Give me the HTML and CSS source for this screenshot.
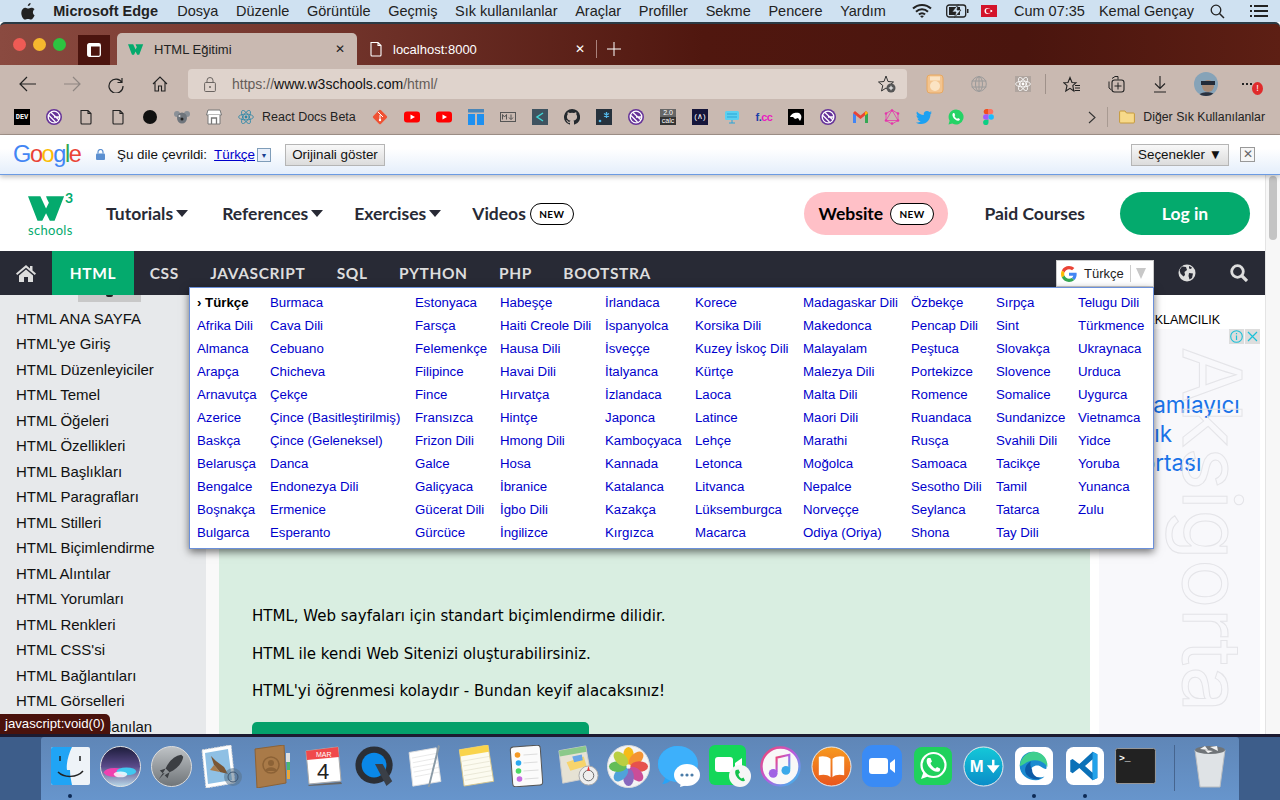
FILE: index.html
```html
<!DOCTYPE html>
<html lang="tr">
<head>
  <meta charset="UTF-8" />
  <title>HTML Eğitimi</title>
  <link rel="stylesheet" href="styles.css">
</head>
<body>

<svg class="sprites" width="0" height="0">
  <symbol id="w3" viewBox="0 0 40 26"><path d="M0 0H13L19 13 22 7 20 3 19 0H38L28 26H23L19 18 15 26H10Z" fill="#04aa6d"/></symbol>
  <symbol id="doc" viewBox="0 0 16 16"><path d="M3 1.500H10L13 4.500V14A1 1 0 0 1 12 15H4A1 1 0 0 1 3 14ZM10 1.500V4.500H13" fill="none" stroke="currentColor" stroke-width="1.100"/></symbol>
  <symbol id="gatsby" viewBox="0 0 16 16"><circle cx="8" cy="8" r="8" fill="#663399"/><circle cx="8" cy="8" r="5.800" fill="none" stroke="#fff" stroke-width="1.300"/><path d="M3 6.500 9.500 13M5 3.500 13 11M8 8H13" stroke="#fff" stroke-width="1.300" fill="none"/></symbol>
  <symbol id="yt" viewBox="0 0 16 16"><rect y="2.500" width="16" height="11" rx="3" fill="#f00"/><path d="M6.500 5.500 11 8 6.500 10.500Z" fill="#fff"/></symbol>
  <symbol id="react" viewBox="0 0 16 16"><g fill="none" stroke="currentColor" stroke-width=".8"><ellipse cx="8" cy="8" rx="7.400" ry="2.900"/><ellipse cx="8" cy="8" rx="7.400" ry="2.900" transform="rotate(60 8 8)"/><ellipse cx="8" cy="8" rx="7.400" ry="2.900" transform="rotate(120 8 8)"/></g><circle cx="8" cy="8" r="1.400" fill="currentColor"/></symbol>
  <symbol id="gg" viewBox="0 0 48 48"><path fill="#EA4335" d="M24 9.500c3.540 0 6.710 1.220 9.210 3.600l6.850-6.850C35.900 2.380 30.470 0 24 0 14.620 0 6.510 5.380 2.560 13.220l7.980 6.190C12.430 13.720 17.740 9.500 24 9.500z"/><path fill="#4285F4" d="M46.980 24.550c0-1.570-.15-3.090-.38-4.550H24v9.020h12.940c-.58 2.960-2.260 5.480-4.780 7.180l7.730 6c4.510-4.180 7.090-10.360 7.090-17.650z"/><path fill="#FBBC05" d="M10.530 28.590c-.48-1.450-.76-2.990-.76-4.590s.27-3.140.76-4.590l-7.980-6.190C.92 16.460 0 20.120 0 24c0 3.880.92 7.540 2.560 10.780l7.970-6.190z"/><path fill="#34A853" d="M24 48c6.480 0 11.930-2.130 15.890-5.810l-7.730-6c-2.150 1.450-4.920 2.300-8.160 2.300-6.260 0-11.570-4.220-13.470-9.910l-7.980 6.190C6.510 42.620 14.620 48 24 48z"/></symbol>
</svg>

<!-- macos menu bar -->
<div class="menubar">
  <svg class="apple" width="14" height="17" viewBox="0 0 14 17"><path d="M9.600 0C9.700 1.600 8.300 3.200 6.800 3.100 6.700 1.600 8.100.1 9.600 0ZM13.600 12.300C12.800 14.200 11.500 16.600 10 16.600 8.800 16.600 8.500 15.900 7 15.900 5.500 15.900 5.100 16.600 4 16.600 2.300 16.600.3 13.100.3 10 .3 6.800 2.300 4.800 4.400 4.800 5.600 4.800 6.500 5.600 7.200 5.600 7.900 5.600 9 4.600 10.500 4.700 11.100 4.700 12.700 4.900 13.600 6.300 11.300 7.700 11.500 11.300 13.600 12.300Z" fill="#222"/></svg>
  <b class="menu-app">Microsoft Edge</b>
  <span>Dosya</span><span>Düzenle</span><span>Görüntüle</span><span>Geçmiş</span><span>Sık kullanılanlar</span><span>Araçlar</span><span>Profiller</span><span>Sekme</span><span>Pencere</span><span>Yardım</span>
  <div class="menu-right">
    <svg width="20" height="16" viewBox="0 0 20 16"><g fill="none" stroke="#222" stroke-width="2"><path d="M1 5.500A13 13 0 0 1 19 5.500"/><path d="M4 8.700A8.500 8.500 0 0 1 16 8.700"/><path d="M7 11.500A4 4 0 0 1 13 11.500"/></g><path d="M10 15 8 13Q10 11.800 12 13Z" fill="#222"/></svg>
    <svg class="batt" width="23" height="14" viewBox="0 0 23 14"><rect x=".7" y="1" width="19" height="12" rx="2.500" fill="none" stroke="#222" stroke-width="1.300"/><rect x="3" y="3" width="11" height="8" fill="#222"/><path d="M21 5h1.500v4H21Z" fill="#222"/><path d="M12 .5 6 8h4L8.500 13.500 15 6h-4Z" fill="#cfe1f1" stroke="#222" stroke-width=".7"/></svg>
    <svg class="flag" width="16" height="12" viewBox="0 0 16 12"><rect width="16" height="12" fill="#d3132a"/><circle cx="6.500" cy="6" r="3" fill="#fff"/><circle cx="7.300" cy="6" r="2.400" fill="#d3132a"/><circle cx="10.300" cy="6" r="1" fill="#fff"/></svg>
    <span class="menu-clock">Cum 07:35</span>
    <span class="menu-user">Kemal Gençay</span>
    <svg class="menu-search" width="15" height="15" viewBox="0 0 15 15"><circle cx="6" cy="6" r="4.800" fill="none" stroke="#222" stroke-width="1.300"/><path d="M9.500 9.500 14 14" stroke="#222" stroke-width="1.500"/></svg>
    <svg class="menu-list" width="18" height="12" viewBox="0 0 18 12"><path d="M0 1h2M4 1h14M0 6h2M4 6h14M0 11h2M4 11h14" stroke="#222" stroke-width="1.800"/></svg>
  </div>
</div>

<div class="window">

  <div class="tabstrip">
    <i class="light red"></i><i class="light yellow"></i><i class="light green"></i>
    <div class="tabs-btn"><svg width="14" height="14" viewBox="0 0 14 14"><rect x=".7" y=".7" width="12.600" height="12.600" rx="1.500" fill="none" stroke="#fff" stroke-width="1.300"/><path d="M1 1H13V3.500H4V13H1Z" fill="#fff"/></svg></div>
    <div class="tab tab-active">
      <svg class="tab-ico" width="16" height="11"><use href="#w3"/></svg>
      <span>HTML Eğitimi</span>
      <span class="tab-x">✕</span>
    </div>
    <div class="tab tab-other">
      <svg class="tab-ico" width="16" height="16"><use href="#doc"/></svg>
      <span>localhost:8000</span>
      <span class="tab-x">✕</span>
    </div>
    <div class="tab-sep"></div>
    <svg class="tab-plus" width="14" height="14" viewBox="0 0 14 14"><path d="M7 0V14M0 7H14" stroke="#fff" stroke-width="1"/></svg>
  </div>

  <div class="toolbar">
    <div class="tool"><svg width="18" height="16" viewBox="0 0 18 16"><path d="M17 8H1M8 1 1 8 8 15" fill="none" stroke="#222" stroke-width="1.200"/></svg></div>
    <div class="tool"><svg width="18" height="16" viewBox="0 0 18 16"><path d="M1 8H17M10 1 17 8 10 15" fill="none" stroke="#8f8682" stroke-width="1.200"/></svg></div>
    <div class="tool"><svg width="18" height="18" viewBox="0 0 18 18"><path d="M15 3V7.500H10.500M15 7.500A7 7 0 1 0 16 11" fill="none" stroke="#222" stroke-width="1.200"/></svg></div>
    <div class="tool"><svg width="16" height="16" viewBox="0 0 16 16"><path d="M1 8 8 1 15 8M3 6.500V15H6.500V10H9.500V15H13V6.500" fill="none" stroke="#222" stroke-width="1.100"/></svg></div>
    <div class="address">
      <svg class="addr-lock" width="12" height="15" viewBox="0 0 12 15"><rect x=".6" y="5.500" width="10.800" height="9" rx="1" fill="none" stroke="#6a6461" stroke-width="1"/><path d="M3 5.500V3.500A3 3 0 0 1 9 3.500V5.500" fill="none" stroke="#6a6461"/><circle cx="6" cy="10" r="1" fill="#6a6461"/></svg>
      <span class="addr-url">https://<b>www.w3schools.com</b>/html/</span>
      <svg class="addr-star" width="18" height="18" viewBox="0 0 18 18"><path d="M8 1 10 6.500 15.500 7 11.200 10.500 12.500 16 8 13 3.500 16 4.800 10.500.5 7 6 6.500Z" fill="none" stroke="#333" stroke-width="1"/><circle cx="13" cy="13" r="4.500" fill="#555"/><path d="M13 10.800V15.200M10.800 13H15.200" stroke="#fff"/></svg>
    </div>
    <div class="tool"><svg width="18" height="20" viewBox="0 0 18 20"><rect x="1" y="1" width="16" height="18" rx="3" fill="#f3c48f" stroke="#e8a860"/><circle cx="9" cy="12" r="5" fill="#fbe3c3"/><rect x="4" y="2.500" width="10" height="4" fill="#fbe3c3"/></svg></div>
    <div class="tool"><svg width="16" height="16" viewBox="0 0 16 16"><g fill="none" stroke="#9a9a9a"><circle cx="8" cy="8" r="7.300"/><ellipse cx="8" cy="8" rx="3.500" ry="7.300"/><path d="M8 0V16M.7 5H15.300M.7 11H15.300"/></g></svg></div>
    <div class="tool"><svg class="ext-react" width="16" height="16"><use href="#react"/></svg></div>
    <div class="tool-sep"></div>
    <div class="tool"><svg width="18" height="17" viewBox="0 0 18 17"><path d="M7 1.500 9 6.500 13 6.700 9.800 9.700 10.800 15 7 12.300 2.800 15 4 9.700.8 6.700 5 6.500Z" fill="none" stroke="#222" stroke-width="1.100"/><path d="M12 9.500H17M12 12H17M11.500 14.500H17" stroke="#222"/></svg></div>
    <div class="tool"><svg width="18" height="18" viewBox="0 0 18 18"><path d="M5 3.500 8 1.500 11 1.500V4.500M2 6.500V13L4.500 15" fill="none" stroke="#222"/><rect x="5" y="5" width="12" height="12" rx="2.500" fill="none" stroke="#222" stroke-width="1.100"/><path d="M11 7.500V14.500M7.500 11H14.500" stroke="#222"/></svg></div>
    <div class="tool"><svg width="14" height="17" viewBox="0 0 14 17"><path d="M7 0V12M2 7.500 7 12.500 12 7.500M1 16H13" fill="none" stroke="#222" stroke-width="1.100"/></svg></div>
    <div class="tool tool-avatar"><svg width="24" height="24" viewBox="0 0 24 24"><defs><clipPath id="av"><circle cx="12" cy="12" r="12"/></clipPath></defs><g clip-path="url(#av)"><rect width="24" height="24" fill="#86a3b8"/><circle cx="14" cy="14" r="6" fill="#a78a76"/><path d="M7 9 H21 V13 H7Z" fill="#232b38"/><path d="M4 24C6 19 20 19 22 24Z" fill="#2a3240"/></g></svg></div>
    <div class="tool tool-more"><span class="more-dots"><i></i><i></i><i></i></span><i class="more-badge">!</i></div>
  </div>

  <div class="bookmarks">
    <div class="bm"><span class="ico-dev">DEV</span></div>
    <div class="bm"><svg width="16" height="16"><use href="#gatsby"/></svg></div>
    <div class="bm"><svg width="16" height="16" class="ico-dark"><use href="#doc"/></svg></div>
    <div class="bm"><svg width="16" height="16" class="ico-dark"><use href="#doc"/></svg></div>
    <div class="bm"><i class="ico-dot"></i></div>
    <div class="bm"><svg width="16" height="14" viewBox="0 0 16 14"><circle cx="3" cy="4" r="3" fill="#8a9097"/><circle cx="13" cy="4" r="3" fill="#8a9097"/><ellipse cx="8" cy="8" rx="5" ry="5.500" fill="#6f757c"/><circle cx="8" cy="9" r="1.500" fill="#222"/><circle cx="5.500" cy="6" r="1" fill="#ddd"/></svg></div>
    <div class="bm"><svg width="16" height="16" viewBox="0 0 16 16"><path d="M2 1H14L15.500 6H.5Z" fill="#fff" stroke="#777"/><path d="M2 6V15H14V6" fill="#fff" stroke="#777"/><path d="M5.500 15V9H10.500V15" fill="none" stroke="#777" stroke-width="1.300"/></svg></div>
    <div class="bm bm-text"><span class="bm-cell"><svg class="ico-react" width="16" height="16"><use href="#react"/></svg></span>React Docs Beta</div>
    <div class="bm"><svg width="16" height="16" viewBox="0 0 16 16"><rect x="2.500" y="2.500" width="11" height="11" rx="1.500" fill="#f05133" transform="rotate(45 8 8)"/><path d="M6 3 11 8M8 6V12" stroke="#fff" stroke-width="1"/><circle cx="8" cy="11" r="1.200" fill="#fff"/></svg></div>
    <div class="bm"><svg width="16" height="16"><use href="#yt"/></svg></div>
    <div class="bm"><svg width="16" height="16"><use href="#yt"/></svg></div>
    <div class="bm"><svg width="16" height="16" viewBox="0 0 16 16"><rect width="16" height="3.500" fill="#4a86b8"/><rect y="5" width="7" height="11" fill="#1e90f0"/><rect x="9" y="5" width="7" height="11" fill="#1e90f0"/></svg></div>
    <div class="bm"><svg width="16" height="10" viewBox="0 0 16 10"><rect x=".5" y=".5" width="15" height="9" fill="none" stroke="#555"/><path d="M2.500 7.500V2.500L4.500 5 6.500 2.500V7.500M11 2.500V7M9 5.500 11 7.700 13 5.500" fill="none" stroke="#555"/></svg></div>
    <div class="bm"><svg width="16" height="16" viewBox="0 0 16 16"><rect width="16" height="16" fill="#3f5360"/><path d="M11 4 5 8 11 12" fill="none" stroke="#41d6d6" stroke-width="1.500"/></svg></div>
    <div class="bm"><svg width="16" height="16" viewBox="0 0 16 16"><path d="M8 0a8 8 0 0 0-2.500 15.600c.4.100.5-.2.500-.4v-1.400c-2.200.5-2.700-1-2.700-1-.4-.9-.9-1.200-.9-1.200-.7-.5.100-.5.100-.5.800.1 1.200.8 1.200.8.700 1.200 1.900.9 2.300.7.100-.5.300-.9.500-1.100-1.800-.2-3.600-.9-3.600-4 0-.9.300-1.600.8-2.100-.1-.2-.4-1 .1-2.100 0 0 .7-.2 2.200.8a7.700 7.700 0 0 1 4 0c1.500-1 2.200-.8 2.200-.8.400 1.100.2 1.900.1 2.100.5.600.8 1.300.8 2.100 0 3.100-1.900 3.800-3.700 4 .3.300.6.800.6 1.500v2.200c0 .2.100.5.600.4A8 8 0 0 0 8 0Z" fill="#24292e"/></svg></div>
    <div class="bm"><svg width="16" height="16" viewBox="0 0 16 16"><rect width="16" height="16" fill="#26323d"/><circle cx="4" cy="12" r="1.300" fill="#53b7e8"/><path d="M10.500 3V9M8 4.500 13 7.500M13 4.500 8 7.500" stroke="#53b7e8" stroke-width="1.300"/></svg></div>
    <div class="bm"><svg width="16" height="16"><use href="#gatsby"/></svg></div>
    <div class="bm"><span class="ico-calc"><b>2.0</b><b>calc</b></span></div>
    <div class="bm"><span class="ico-tail">(∧)</span></div>
    <div class="bm"><svg width="16" height="14" viewBox="0 0 16 14"><rect x="1" y="1" width="14" height="9" rx="1.500" fill="#5bd0f0"/><path d="M3 4H13M3 7H13M5 13H11M8 10V13" stroke="#2aa5d8"/></svg></div>
    <div class="bm"><span class="ico-fcc">f.<em>cc</em></span></div>
    <div class="bm"><svg width="16" height="16" viewBox="0 0 16 16"><rect width="16" height="16"/><path d="M2 8C3 4 8 3 11 4 14 6 14 9 12 12L10 9 7 10 5 8Z" fill="#fff"/></svg></div>
    <div class="bm"><svg width="16" height="16"><use href="#gatsby"/></svg></div>
    <div class="bm"><svg width="15" height="12" viewBox="0 0 15 12"><path d="M0 2V12H3V4Z" fill="#4285f4"/><path d="M15 2V12H12V4Z" fill="#34a853"/><path d="M0 2 2 0 7.500 4.500 13 0 15 2 7.500 8Z" fill="#ea4335"/><path d="M13 0 15 2 12 4.500V1.500Z" fill="#fbbc05"/></svg></div>
    <div class="bm"><svg width="16" height="16" viewBox="0 0 16 16"><path d="M8 1 14 4.500V11.500L8 15 2 11.500V4.500ZM8 1 2 11.500H14Z" fill="none" stroke="#e535ab" stroke-width=".8"/><g fill="#e535ab"><circle cx="8" cy="1.500" r="1.300"/><circle cx="14" cy="4.500" r="1.300"/><circle cx="14" cy="11.500" r="1.300"/><circle cx="8" cy="14.500" r="1.300"/><circle cx="2" cy="11.500" r="1.300"/><circle cx="2" cy="4.500" r="1.300"/></g></svg></div>
    <div class="bm"><svg width="16" height="13" viewBox="0 0 16 13"><path d="M16 1.500 14.500 3.200C14.500 8 11 13 5 13 3 13 1.500 12.500 0 11.500 2 11.700 3.500 11 4.700 10.200 3 10 2 9 1.500 7.700H3C1.300 7 .5 5.800.5 4.200L2 4.700C.5 3.500.2 1.800 1 .5 2.800 2.600 5 3.800 7.800 4 7.300 1.500 9 0 11 0 12 0 12.800.4 13.400 1L15.500.2 14.500 2Z" fill="#1da1f2"/></svg></div>
    <div class="bm"><svg width="16" height="16" viewBox="0 0 16 16"><path d="M8 .5A7.500 7.500 0 0 0 1.600 11.800L.5 15.500 4.300 14.500A7.500 7.500 0 1 0 8 .5Z" fill="#25d366"/><path d="M5.300 4C4.500 4.500 4 6 5 8 6 10 8.500 12 10.500 11.800 11.500 11.500 12 10.500 11.800 10L10 9 9.300 9.800C8.300 9.500 6.800 8 6.500 7L7.200 6.200 6.300 4Z" fill="#fff"/></svg></div>
    <div class="bm"><svg width="11" height="16" viewBox="0 0 11 16"><path d="M5.500 0H2.800A2.700 2.700 0 0 0 2.800 5.300H5.500Z" fill="#f24e1e"/><path d="M5.500 0H8.200A2.700 2.700 0 0 1 8.200 5.300H5.500Z" fill="#ff7262"/><path d="M5.500 5.300H2.800A2.700 2.700 0 0 0 2.800 10.700H5.500Z" fill="#a259ff"/><circle cx="8.200" cy="8" r="2.700" fill="#1abcfe"/><path d="M5.500 10.700H2.800A2.700 2.700 0 1 0 5.500 13.400Z" fill="#0acf83"/></svg></div>
    <div class="bm-right">
      <svg width="8" height="13" viewBox="0 0 8 13"><path d="M1 1 7 6.500 1 12" fill="none" stroke="#333" stroke-width="1.100"/></svg>
      <i class="bm-sep"></i>
      <svg width="16" height="14" viewBox="0 0 16 14"><path d="M.6 2A1 1 0 0 1 1.600 1H6L7.500 3H14.400A1 1 0 0 1 15.400 4V12A1 1 0 0 1 14.400 13H1.600A1 1 0 0 1 .6 12Z" fill="#f7d98a" stroke="#c69a3c"/></svg>
      <span class="bm-folder-name">Diğer Sık Kullanılanlar</span>
    </div>
  </div>

  <!-- google translate bar -->
  <div class="translate">
    <span class="g-logo"><i class="gb">G</i><i class="gr">o</i><i class="gy">o</i><i class="gb">g</i><i class="gg">l</i><i class="gr">e</i></span>
    <svg class="tr-lock" width="9" height="11" viewBox="0 0 9 11"><rect y="4.500" width="9" height="6.500" rx="1" fill="#5b8fd0"/><path d="M2 4.500V3A2.500 2.500 0 0 1 7 3V4.500" fill="none" stroke="#5b8fd0" stroke-width="1.200"/></svg>
    <span class="tr-label">Şu dile çevrildi:</span>
    <a class="tr-link">Türkçe</a>
    <span class="tr-select">▼</span>
    <button class="tr-btn tr-orig">Orijinali göster</button>
    <button class="tr-btn tr-opts">Seçenekler ▼</button>
    <span class="tr-close">✕</span>
  </div>

  <div class="browser-page">
    <div class="page-scroll">

      <header class="site-head">
        <div class="logo">
          <svg width="38" height="25"><use href="#w3"/></svg>
          <sup>3</sup>
          <span>schools</span>
        </div>
        <a class="head-link">Tutorials<i class="caret"></i></a>
        <a class="head-link">References<i class="caret"></i></a>
        <a class="head-link">Exercises<i class="caret"></i></a>
        <a class="head-link">Videos<span class="new">NEW</span></a>
        <a class="pill pill-pink">Website<span class="new">NEW</span></a>
        <a class="head-link paid">Paid Courses</a>
        <a class="pill pill-green">Log in</a>
      </header>

      <nav class="topnav">
        <a class="nav-home"><svg width="20" height="17" viewBox="0 0 20 17"><path d="M10 0 0 8.500 1.200 10 10 2.800 18.800 10 20 8.500 16.500 5.500V1H14V3.400Z" fill="#ddd"/><path d="M3 10.500 10 4.500 17 10.500V17H12V12H8V17H3Z" fill="#ddd"/></svg></a>
        <a class="nav-active">HTML</a>
        <a>CSS</a>
        <a>JAVASCRIPT</a>
        <a>SQL</a>
        <a>PYTHON</a>
        <a>PHP</a>
        <a>BOOTSTRA</a>
        <div class="lang-widget">
          <svg width="16" height="16"><use href="#gg"/></svg>
          <span>Türkçe</span>
          <i class="lang-sep"></i>
          <i class="lang-arrow"></i>
        </div>
        <a class="nav-ico"><svg width="18" height="18" viewBox="0 0 18 18"><circle cx="9" cy="9" r="8.500" fill="#ddd"/><path d="M4 2.500 8 3 9 6 6.500 8 7 11 5.500 12.500 2.500 9.500 1.500 6ZM11 9 15 9.500 14 14 11.500 15.500 10.500 12ZM11 2 14 3.500 13 5 11 4.500Z" fill="#282a35"/></svg></a>
        <a class="nav-ico"><svg width="18" height="18" viewBox="0 0 18 18"><circle cx="7.500" cy="7.500" r="5.800" fill="none" stroke="#ddd" stroke-width="2.800"/><path d="M12 12 17 17" stroke="#ddd" stroke-width="3.200"/></svg></a>
      </nav>

      <div class="content">
        <aside class="sidebar">
          <div class="side-cut"><i></i></div>
          <a>HTML ANA SAYFA</a>
          <a>HTML'ye Giriş</a>
          <a>HTML Düzenleyiciler</a>
          <a>HTML Temel</a>
          <a>HTML Öğeleri</a>
          <a>HTML Özellikleri</a>
          <a>HTML Başlıkları</a>
          <a>HTML Paragrafları</a>
          <a>HTML Stilleri</a>
          <a>HTML Biçimlendirme</a>
          <a>HTML Alıntılar</a>
          <a>HTML Yorumları</a>
          <a>HTML Renkleri</a>
          <a>HTML CSS'si</a>
          <a>HTML Bağlantıları</a>
          <a>HTML Görselleri</a>
          <a>HTML Sık Kullanılan</a>
        </aside>
        <main class="main">
          <div class="intro">
            <p>HTML, Web sayfaları için standart biçimlendirme dilidir.</p>
            <p>HTML ile kendi Web Sitenizi oluşturabilirsiniz.</p>
            <p>HTML'yi öğrenmesi kolaydır - Bundan keyif alacaksınız!</p>
            <div class="start-btn"></div>
          </div>
        </main>
        <aside class="right-col">
          <div class="ad-label">REKLAMCILIK</div>
          <div class="ad">
            <span class="ad-mark">Aksigorta</span>
            <div class="ad-head">Tamamlayıcı<br>Sağlık<br>Sigortası</div>
            <div class="ad-icons">
              <i><svg width="13" height="13" viewBox="0 0 13 13"><circle cx="6.500" cy="6.500" r="5.800" fill="none" stroke="#1cc0d8" stroke-width="1.100"/><path d="M6.500 5.500V10M6.500 3V4.300" stroke="#1cc0d8" stroke-width="1.200"/></svg></i>
              <i><svg width="11" height="11" viewBox="0 0 11 11"><path d="M1 1 10 10M10 1 1 10" stroke="#1cc0d8" stroke-width="1.200"/></svg></i>
            </div>
          </div>
        </aside>
      </div>
    </div>
    <div class="scrollbar"><i></i></div>
  </div>

  <!-- language menu opened from the translate widget -->
  <div class="lang-menu">
    <b class="lang-current">› Türkçe</b><a>Afrika Dili</a><a>Almanca</a><a>Arapça</a><a>Arnavutça</a><a>Azerice</a><a>Baskça</a><a>Belarusça</a><a>Bengalce</a><a>Boşnakça</a><a>Bulgarca</a>
    <a>Burmaca</a><a>Cava Dili</a><a>Cebuano</a><a>Chicheva</a><a>Çekçe</a><a>Çince (Basitleştirilmiş)</a><a>Çince (Geleneksel)</a><a>Danca</a><a>Endonezya Dili</a><a>Ermenice</a><a>Esperanto</a>
    <a>Estonyaca</a><a>Farsça</a><a>Felemenkçe</a><a>Filipince</a><a>Fince</a><a>Fransızca</a><a>Frizon Dili</a><a>Galce</a><a>Galiçyaca</a><a>Gücerat Dili</a><a>Gürcüce</a>
    <a>Habeşçe</a><a>Haiti Creole Dili</a><a>Hausa Dili</a><a>Havai Dili</a><a>Hırvatça</a><a>Hintçe</a><a>Hmong Dili</a><a>Hosa</a><a>İbranice</a><a>İgbo Dili</a><a>İngilizce</a>
    <a>İrlandaca</a><a>İspanyolca</a><a>İsveççe</a><a>İtalyanca</a><a>İzlandaca</a><a>Japonca</a><a>Kamboçyaca</a><a>Kannada</a><a>Katalanca</a><a>Kazakça</a><a>Kırgızca</a>
    <a>Korece</a><a>Korsika Dili</a><a>Kuzey İskoç Dili</a><a>Kürtçe</a><a>Laoca</a><a>Latince</a><a>Lehçe</a><a>Letonca</a><a>Litvanca</a><a>Lüksemburgca</a><a>Macarca</a>
    <a>Madagaskar Dili</a><a>Makedonca</a><a>Malayalam</a><a>Malezya Dili</a><a>Malta Dili</a><a>Maori Dili</a><a>Marathi</a><a>Moğolca</a><a>Nepalce</a><a>Norveççe</a><a>Odiya (Oriya)</a>
    <a>Özbekçe</a><a>Pencap Dili</a><a>Peştuca</a><a>Portekizce</a><a>Romence</a><a>Ruandaca</a><a>Rusça</a><a>Samoaca</a><a>Sesotho Dili</a><a>Seylanca</a><a>Shona</a>
    <a>Sırpça</a><a>Sint</a><a>Slovakça</a><a>Slovence</a><a>Somalice</a><a>Sundanizce</a><a>Svahili Dili</a><a>Tacikçe</a><a>Tamil</a><a>Tatarca</a><a>Tay Dili</a>
    <a>Telugu Dili</a><a>Türkmence</a><a>Ukraynaca</a><a>Urduca</a><a>Uygurca</a><a>Vietnamca</a><a>Yidce</a><a>Yoruba</a><a>Yunanca</a><a>Zulu</a>
  </div>

  <div class="status-tip">javascript:void(0)</div>
</div>

<!-- dock -->
<div class="desktop">
  <div class="dock">
    <div class="dock-app running"><svg width="39" height="38" viewBox="0 0 39 38"><rect width="39" height="38" rx="2" fill="#eef3f8"/><path d="M2 0H21C17 8 15 18 16 23H19C19 28 20 33 21 38H2A2 2 0 0 1 0 36V2A2 2 0 0 1 2 0Z" fill="#20a4f5"/><path d="M9 9V14M29 9V14" stroke="#222" stroke-width="1.500"/><path d="M7 25C13 31 26 31 32 24" fill="none" stroke="#222" stroke-width="1.500"/></svg></div>
    <div class="dock-app"><svg width="41" height="41" viewBox="0 0 42 42"><defs><linearGradient id="siri" x1="0" y1="0" x2="0" y2="1"><stop offset="0" stop-color="#1c1c3a"/><stop offset=".5" stop-color="#5a4a8a"/><stop offset="1" stop-color="#b8d8e8"/></linearGradient></defs><circle cx="21" cy="21" r="20.500" fill="url(#siri)" stroke="#e4e4e4"/><ellipse cx="15" cy="27" rx="11" ry="4.500" fill="#f040b0"/><ellipse cx="27" cy="26" rx="10" ry="4" fill="#40c8f0"/><ellipse cx="21" cy="29" rx="7" ry="3" fill="#fff" opacity=".8"/></svg></div>
    <div class="dock-app"><svg width="41" height="41" viewBox="0 0 42 42"><defs><linearGradient id="rocket" x1="0" y1="0" x2="0" y2="1"><stop offset="0" stop-color="#bfc3c6"/><stop offset="1" stop-color="#6f7478"/></linearGradient></defs><circle cx="21" cy="21" r="20.500" fill="url(#rocket)" stroke="#ddd"/><path d="M31 9C24 10 18 16 15 23L19 27C26 24 32 18 33 11ZM15 23 9 25 12 28ZM19 27 17 33 14 30ZM14 28 8 34 12 28Z" fill="#3b3e42"/></svg></div>
    <div class="dock-app"><svg width="42" height="43" viewBox="0 0 42 43"><path d="M1 5 30 0 34 38 5 43Z" fill="#fff" stroke="#ddd" stroke-dasharray="2 1"/><path d="M4 8 27 4 31 35 7 39Z" fill="#8fc0e4"/><path d="M10 11 15 16 23 22 27 29 19 27 13 20Z" fill="#7a5634"/><path d="M13 20 9 25 19 27Z" fill="#a97d4e"/><circle cx="32" cy="32" r="9" fill="#5a7288" opacity=".55"/><circle cx="32" cy="32" r="5" fill="none" stroke="#3f5670"/></svg></div>
    <div class="dock-app"><svg width="38" height="43" viewBox="0 0 38 43"><path d="M1 4 30 0 32 38 3 43Z" fill="#a97a48" stroke="#8c6236"/><rect x="32" y="8" width="4" height="9" fill="#e0e0e0"/><rect x="33" y="17" width="3" height="8" fill="#4ab870"/><rect x="33" y="25" width="3" height="9" fill="#e8a83c"/><circle cx="17" cy="20" r="8" fill="none" stroke="#8c6236" stroke-width="1.500"/><circle cx="17" cy="18" r="3" fill="#8c6236"/><path d="M11 26C12 21 22 21 23 26" fill="#8c6236"/></svg></div>
    <div class="dock-app"><svg width="38" height="40" viewBox="0 0 38 40"><path d="M3 39 36 36 37 38 4 40Z" fill="#666"/><path d="M1 5 33 1 36 35 4 38Z" fill="#fff" stroke="#aaa"/><path d="M1 5 33 1 34 11 2 14Z" fill="#f0494b"/><text x="11" y="11" class="dock-cal-m">MAR</text><text x="12" y="33" class="dock-cal-d">4</text></svg></div>
    <div class="dock-app"><svg width="42" height="42" viewBox="0 0 42 44"><circle cx="20" cy="21" r="19.500" fill="#2b2f36"/><circle cx="20" cy="21" r="13" fill="#0a88e8"/><path d="M21 20H29L39 38 33 43Z" fill="#3a3f47"/></svg></div>
    <div class="dock-app"><svg width="36" height="43" viewBox="0 0 36 46"><path d="M1 8 30 3 35 39 5 44Z" fill="#fff" stroke="#ddd"/><path d="M4 14 30 9M5 19 31 14M5 24 32 19M6 29 33 24M7 34 33 29" stroke="#ddd" stroke-width=".7"/><path d="M32 0 34 1 23 45 21 45Z" fill="#8a9aa6"/></svg></div>
    <div class="dock-app"><svg width="37" height="42" viewBox="0 0 36 44"><path d="M0 5 30 0 36 38 5 43Z" fill="#fcfbf0" stroke="#d6c68e"/><path d="M0 5 30 0 31 7 1 12Z" fill="#f9d44c"/><path d="M3 17 31 12M4 22 32 17M5 27 33 22M5 32 33 27M6 37 34 32" stroke="#e5e2d0" stroke-width=".8"/></svg></div>
    <div class="dock-app"><svg width="35" height="42" viewBox="0 0 34 42"><rect x="2" y="1" width="30" height="40" rx="3" fill="#fbfbfb" stroke="#555" transform="rotate(-4 17 21)"/><circle cx="8" cy="10" r="2.800" fill="#f59a23"/><circle cx="9" cy="18" r="2.800" fill="#2aa8f0"/><circle cx="9" cy="26" r="2.800" fill="#4cd964"/><circle cx="10" cy="34" r="2.800" fill="#c66be0"/><path d="M14 10 28 9M14 18 28 17M14 26 29 25M15 34 29 33" stroke="#ddd"/></svg></div>
    <div class="dock-app"><svg width="44" height="42" viewBox="0 0 44 44"><path d="M2 6 30 1 36 34 6 40Z" fill="#e6e2d4" stroke="#ccc"/><path d="M2 6 30 1 31 7 3 12Z" fill="#8bc98a"/><path d="M10 18 28 12 31 22 14 27Z" fill="#f7d46b"/><path d="M16 12 26 10 27 16 18 18Z" fill="#6aa6e8"/><circle cx="33" cy="32" r="10" fill="#eee" stroke="#aaa"/><circle cx="33" cy="32" r="5.500" fill="none" stroke="#666"/><path d="M33 22 34.500 27H31.500Z" fill="#e33"/></svg></div>
    <div class="dock-app"><svg width="43" height="43" viewBox="0 0 44 44"><circle cx="22" cy="22" r="21.500" fill="#f4f4f4" stroke="#ddd"/><g opacity=".9"><ellipse cx="22" cy="11" rx="5.500" ry="9" fill="#f7b500"/><ellipse cx="22" cy="11" rx="5.500" ry="9" fill="#f58a1f" transform="rotate(45 22 22)"/><ellipse cx="22" cy="11" rx="5.500" ry="9" fill="#e5413b" transform="rotate(90 22 22)"/><ellipse cx="22" cy="11" rx="5.500" ry="9" fill="#c63c8f" transform="rotate(135 22 22)"/><ellipse cx="22" cy="11" rx="5.500" ry="9" fill="#7d5ab8" transform="rotate(180 22 22)"/><ellipse cx="22" cy="11" rx="5.500" ry="9" fill="#3e9ad8" transform="rotate(225 22 22)"/><ellipse cx="22" cy="11" rx="5.500" ry="9" fill="#54b848" transform="rotate(270 22 22)"/><ellipse cx="22" cy="11" rx="5.500" ry="9" fill="#b4cc2e" transform="rotate(315 22 22)"/></g></svg></div>
    <div class="dock-app"><svg width="42" height="42" viewBox="0 0 42 42"><path d="M20 1C9 1 0 9 0 19 0 25 3 29 7 32 7 35 5 38 4 39 8 39 11 37 13 35Z" fill="#27a4f8"/><ellipse cx="20" cy="19" rx="20" ry="18" fill="#3db0fb"/><ellipse cx="29" cy="30" rx="13" ry="11" fill="#fff"/><path d="M23 38 22 42 29 40Z" fill="#fff"/><g fill="#4a7ca8"><circle cx="24" cy="30" r="1.600"/><circle cx="29" cy="30" r="1.600"/><circle cx="34" cy="30" r="1.600"/></g></svg></div>
    <div class="dock-app"><svg width="42" height="42" viewBox="0 0 42 42"><rect width="37" height="40" rx="6" fill="#14d759"/><rect x="6" y="12" width="18" height="15" rx="3" fill="#fff"/><path d="M26 18 33 13V26L26 21Z" fill="#fff"/><circle cx="31" cy="31" r="11" fill="#f6f6f6"/><path d="M27 25C25.500 26 26 30 28.500 33 31 36 34.500 37 36 35.500L34.500 32.500 32.500 33.500C31 33 29.500 30.500 29.500 29L31 27.500 29.500 24.500Z" fill="#14c14c"/></svg></div>
    <div class="dock-app"><svg width="41" height="41" viewBox="0 0 42 42"><defs><linearGradient id="mus" x1="0" y1="0" x2="1" y2="1"><stop offset="0" stop-color="#f4456b"/><stop offset=".5" stop-color="#b85ce0"/><stop offset="1" stop-color="#29c5ec"/></linearGradient></defs><circle cx="21" cy="21" r="19.500" fill="#f8f8f8" stroke="url(#mus)" stroke-width="2.500"/><path d="M17 27V12L30 9V24" fill="none" stroke="url(#mus)" stroke-width="2.200"/><circle cx="13.500" cy="28" r="4.500" fill="#a062e4"/><circle cx="26.500" cy="25" r="4.500" fill="#3ba9ea"/></svg></div>
    <div class="dock-app"><svg width="41" height="41" viewBox="0 0 42 42"><defs><linearGradient id="books" x1="0" y1="0" x2="0" y2="1"><stop offset="0" stop-color="#f79a1f"/><stop offset="1" stop-color="#e8551e"/></linearGradient></defs><circle cx="21" cy="21" r="20" fill="url(#books)" stroke="#eee"/><path d="M20 13C16 10 11 10 8 11V30C12 29 17 29 20 32ZM22 13C26 10 31 10 34 11V30C30 29 25 29 22 32Z" fill="#fff"/></svg></div>
    <div class="dock-app"><svg width="40" height="42" viewBox="0 0 40 42"><rect width="40" height="42" rx="11" fill="#3a8bf5"/><rect x="7" y="13" width="19" height="16" rx="3" fill="#fff"/><path d="M28 18 33 14V28L28 24Z" fill="#fff"/></svg></div>
    <div class="dock-app"><svg width="38" height="38" viewBox="0 0 38 38"><rect width="38" height="38" rx="8" fill="#1fd15c"/><circle cx="19.500" cy="18" r="12" fill="none" stroke="#fff" stroke-width="2.200"/><path d="M9.500 25 7 32 14 29.500" fill="#fff"/><path d="M14 11C12 12.500 12 16 15 20 18 24 22 25.500 25 24.500 26 24 26.500 22 26 21.500L23 20 21.500 21.500C19.500 21 17 18 16.500 16L18 14.500 16.500 11Z" fill="#fff"/></svg></div>
    <div class="dock-app"><svg width="41" height="41" viewBox="0 0 42 42"><defs><linearGradient id="mdn" x1="0" y1="0" x2="0" y2="1"><stop offset="0" stop-color="#14c8d8"/><stop offset="1" stop-color="#0a8cc8"/></linearGradient></defs><circle cx="21" cy="21" r="20" fill="url(#mdn)" stroke="#eee"/><text x="7" y="27" class="dock-md">M</text><path d="M31 14V21M27 21 31 26 35 21Z" stroke="#fff" stroke-width="2.500" fill="#fff"/></svg></div>
    <div class="dock-app running"><svg width="38" height="38" viewBox="0 0 40 40"><rect width="40" height="40" rx="8" fill="#fff"/><path d="M33 23C35 13 28 5 19 5 11 5 5 11 5 20 5 29 13 35 22 35 26 35 29 33 31 31 26 33 19 32 17 27 15 22 21 18 26 20 30 22 32 24 33 23Z" fill="#1b8bd0"/><path d="M5 20C6 11 13 5 20 5 28 5 35 12 34 21 31 15 22 12 15 15 10 17 7 20 5 20Z" fill="#3fcf8e"/><path d="M18 24C18 29 22 32 27 33 23 35 16 34 12 29 9 24 11 18 17 15 15 18 17 21 18 24Z" fill="#0c5aa6"/></svg></div>
    <div class="dock-app running"><svg width="38" height="38" viewBox="0 0 40 40"><rect width="40" height="40" rx="8" fill="#fff"/><path d="M28 5 33 7.500V32.500L28 35 14 22 7 27.500 4.500 26V14L7 12.500 14 18ZM28 13 20 20 28 27Z" fill="#0b71b8"/><path d="M28 5 33 7.500V32.500L28 35Z" fill="#22a2ea"/></svg></div>
    <div class="dock-app"><svg width="41" height="36" viewBox="0 0 42 37"><rect x=".5" y=".5" width="41" height="36" rx="2" fill="#222" stroke="#999"/><text x="4" y="13" class="dock-term">&gt;_</text></svg></div>
    <i class="dock-sep"></i>
    <div class="dock-app"><svg width="34" height="44" viewBox="0 0 34 44"><path d="M2 6 32 6 27 43H7Z" fill="#dfe3e6" stroke="#b8bcc0"/><ellipse cx="17" cy="6" rx="15" ry="4" fill="#6f7478"/><path d="M7 5 12 2 15 6ZM17 3 24 2 25 7ZM12 6 20 7 15 9Z" fill="#f3f3f3"/></svg></div>
  </div>
</div>

</body>
</html>
```

FILE: styles.css
```css
* {
  margin: 0;
  padding: 0;
  box-sizing: border-box;
}

html, body {
  width: 1280px;
  height: 800px;
  overflow: hidden;
}

body {
  display: flex;
  flex-direction: column;
  font-family: "Liberation Sans", sans-serif;
  background: #3d5d8a;
}

i, em {
  font-style: normal;
}

.sprites {
  display: none;
}

/* menu bar */
.menubar {
  height: 22px;
  flex: none;
  display: flex;
  align-items: center;
  gap: 17.700px;
  padding-left: 21px;
  background: #cfe1f1;
  color: #222;
  font-size: 14.500px;
}

.menu-app {
  margin: 0 1.500px 0 0.600px;
}

.menu-right {
  margin-left: auto;
  display: flex;
  align-items: center;
  padding-right: 12px;
  gap: 14px;
}

.flag {
  margin-left: -2.500px;
}

.menu-clock {
  margin-left: 3px;
}

.menu-search {
  margin-left: 2px;
}

.menu-list {
  margin-left: 11px;
}

/* browser window */
.window {
  position: relative;
  height: 712px;
  flex: none;
  display: flex;
  flex-direction: column;
  overflow: hidden;
  background: #fff;
}

.tabstrip {
  height: 43px;
  flex: none;
  display: flex;
  align-items: flex-end;
  border-top: 2px solid #2a3a45;
  border-radius: 5px 5px 0 0;
  background: linear-gradient(90deg, #8a4a40 0, #73352c 25%, #50170f 55%, #4a150e 80%, #5d1f14 100%);
  color: #fff;
}

.light {
  width: 13px;
  height: 13px;
  border-radius: 50%;
  margin-bottom: 14px;
  margin-right: 7px;
}

.light:first-child {
  margin-left: 13px;
}

.red { background: #ee5b55; }
.yellow { background: #f5b82e; }
.green { background: #2dc340; }

.tabs-btn {
  width: 32px;
  height: 30px;
  margin-left: 5px;
  margin-right: 7px;
  display: flex;
  align-items: center;
  justify-content: center;
  background: #4b140e;
}

.tab {
  width: 240px;
  height: 32px;
  display: flex;
  align-items: center;
  padding: 0 12px 0 11px;
  font-size: 13px;
  border-radius: 5px 5px 0 0;
}

.tab-active {
  background: #c9b9b1;
  color: #222;
}

.tab-ico {
  margin-right: 10px;
  color: #fff;
}

.tab-x {
  margin-left: auto;
  font-size: 12px;
}

.tab-other .tab-ico {
  margin-right: 9px;
}

.tab-sep {
  width: 1px;
  height: 18px;
  margin: 0 0 7px -1px;
  background: #a9827c;
}

.tab-plus {
  margin: 0 0 9px 10px;
}

.toolbar {
  height: 35px;
  flex: none;
  display: flex;
  align-items: center;
  padding: 3px 0 0 6px;
  background: #c9b9b1;
}

.tool {
  width: 44px;
  height: 30px;
  flex: none;
  display: flex;
  align-items: center;
  justify-content: center;
}

.address {
  width: 719px;
  height: 30px;
  flex: none;
  margin: 0 6px;
  display: flex;
  align-items: center;
  padding: 0 11px 0 16px;
  border-radius: 4px;
  background: #dfd3cc;
}

.addr-url {
  margin-left: 16px;
  font-size: 14px;
  color: #655d59;
}

.addr-url b {
  font-weight: normal;
  color: #111;
}

.addr-star {
  margin-left: auto;
}

.ext-react {
  color: #fff;
  background: #b0a59f;
}

.tool-sep {
  width: 1px;
  height: 20px;
  margin: 0 4px 0 0;
  background: #9f918a;
}

.tool-avatar {
  margin-left: 2px;
}

.tool-more {
  position: relative;
  justify-content: flex-start;
  padding-left: 14px;
}

.more-dots {
  display: flex;
  gap: 2px;
}

.more-dots i {
  width: 2px;
  height: 2px;
  background: #222;
}

.more-badge {
  position: absolute;
  top: 13px;
  left: 24px;
  width: 11px;
  height: 13px;
  border-radius: 50%;
  background: #e02b2b;
  color: #fff;
  font-size: 9px;
  line-height: 13px;
  text-align: center;
}

.bookmarks {
  height: 35px;
  flex: none;
  display: flex;
  align-items: center;
  padding-left: 6px;
  background: #c9b9b1;
  border-bottom: 1px solid #a3948c;
  font-size: 12.500px;
  color: #222;
}

.bm {
  width: 32px;
  height: 24px;
  flex: none;
  display: flex;
  align-items: center;
  justify-content: center;
}

.bm-text {
  width: 134px;
  justify-content: flex-start;
  white-space: nowrap;
}

.bm-cell {
  width: 32px;
  display: flex;
  justify-content: center;
}

.ico-react {
  color: #2b87a8;
}

.ico-dark {
  color: #222;
}

.ico-dev {
  width: 16px;
  height: 16px;
  background: #000;
  color: #fff;
  font: bold 7px/16px "Liberation Mono", monospace;
  text-align: center;
}

.ico-dot {
  width: 14px;
  height: 14px;
  border-radius: 50%;
  background: #111;
}

.ico-calc {
  width: 16px;
  height: 16px;
  display: flex;
  flex-direction: column;
  font: 7px/8px "Liberation Sans", sans-serif;
  text-align: center;
}

.ico-calc b {
  font-weight: normal;
  color: #fff;
  background: #666;
}

.ico-calc b + b {
  background: #333;
}

.ico-tail {
  width: 16px;
  height: 16px;
  background: #15153a;
  color: #fff;
  font-size: 8px;
  line-height: 16px;
  text-align: center;
}

.ico-fcc {
  color: #1a3fa8;
  font-size: 11px;
  font-weight: bold;
  letter-spacing: -0.5px;
}

.ico-fcc em {
  color: #e81cc0;
}

.bm-right {
  margin-left: auto;
  display: flex;
  align-items: center;
  padding-right: 15px;
  gap: 8px;
}

.bm-sep {
  width: 1px;
  height: 20px;
  margin: 0 3px;
  background: #a89a92;
}

.bm-folder-name {
  font-size: 12.300px;
}

/* translate bar */
.translate {
  height: 40px;
  flex: none;
  position: relative;
  z-index: 1;
  display: flex;
  align-items: center;
  padding: 0 25px 0 14px;
  background: linear-gradient(#fff, #fff 35%, #e4eefb);
  border-bottom: 1px solid #6b9be3;
  box-shadow: 0 2px 5px rgba(0, 0, 0, 0.25);
  font-size: 13.400px;
  color: #111;
}

.g-logo {
  width: 67px;
  margin: -1px 0 0 -1px;
  font-size: 23.500px;
  letter-spacing: -1.400px;
  white-space: nowrap;
}

.gb { color: #4285f4; }
.gr { color: #ea4335; }
.gy { color: #fbbc05; }
.gg { color: #34a853; }

.tr-lock {
  margin-left: 16px;
}

.tr-label {
  margin-left: 12px;
}

.tr-link {
  margin-left: 7px;
  color: #00c;
  text-decoration: underline;
}

.tr-select {
  width: 14px;
  height: 14px;
  margin-left: 2px;
  border: 1px solid #7f9db9;
  color: #1a3f90;
  font-size: 7px;
  line-height: 13px;
  text-align: center;
  background: #e8effa;
}

.tr-btn {
  height: 22px;
  border: 1px solid #b5b5b5;
  background: linear-gradient(#f8f8f8, #dcdcdc);
  font: 13.400px "Liberation Sans", sans-serif;
  color: #111;
}

.tr-orig {
  width: 100px;
  margin-left: 14px;
}

.tr-opts {
  width: 98px;
  margin-left: auto;
}

.tr-close {
  width: 15px;
  height: 15px;
  margin-left: 11px;
  border: 1px solid #999;
  color: #666;
  font-size: 12px;
  line-height: 13px;
  text-align: center;
  background: #f6f6f6;
}

/* page */
.browser-page {
  flex: 1;
  min-height: 0;
  display: flex;
}

.page-scroll {
  flex: 1;
  min-width: 0;
  display: flex;
  flex-direction: column;
  border-right: 1px solid #e4e4e4;
}

.scrollbar {
  width: 14px;
  flex: none;
  padding: 2px 3px;
  background: #f7f7f7;
}

.scrollbar i {
  display: block;
  width: 8px;
  height: 64px;
  margin-top: -1px;
  border-radius: 4px;
  background: #c4c4c4;
}

.site-head {
  height: 76px;
  flex: none;
  display: flex;
  align-items: center;
  padding: 1px 15px 0 28px;
  font-family: "Lato", sans-serif;
  background: #fff;
}

.logo {
  position: relative;
  width: 78px;
  height: 44px;
  flex: none;
  padding-top: 4px;
  color: #04aa6d;
}

.logo svg {
  display: block;
}

.logo sup {
  position: absolute;
  top: -1px;
  left: 37px;
  font-size: 14px;
  font-weight: 700;
  line-height: 14px;
  color: #04aa6d;
}

.logo span {
  display: block;
  font-size: 13px;
  line-height: 14px;
  margin-top: 2px;
  letter-spacing: 0.3px;
}

.head-link {
  display: flex;
  align-items: center;
  margin-right: 31px;
  font-size: 17.500px;
  font-weight: 700;
  color: #282a35;
  white-space: nowrap;
}

.head-link:first-of-type {
  margin-right: 34px;
}

.head-link .new {
  margin-left: 4px;
}

.caret {
  margin-left: 3px;
  border-left: 6px solid transparent;
  border-right: 6px solid transparent;
  border-top: 7px solid #282a35;
}

.new {
  display: inline-block;
  width: 44px;
  height: 22px;
  margin-left: 7px;
  border: 1px solid #000;
  border-radius: 12px;
  background: #fff;
  color: #000;
  font-size: 10px;
  font-weight: 700;
  line-height: 20px;
  letter-spacing: 0.5px;
  text-align: center;
}

.pill {
  height: 43px;
  flex: none;
  display: flex;
  align-items: center;
  justify-content: center;
  border-radius: 22px;
  font-size: 17.500px;
  font-weight: 700;
}

.pill-pink {
  width: 144px;
  margin-left: auto;
  background: #ffc0c7;
  color: #000;
}

.head-link.paid {
  margin: 0 35px 0 36px;
}

.pill-green {
  width: 130px;
  background: #04aa6d;
  color: #fff;
}

.topnav {
  height: 44px;
  flex: none;
  display: flex;
  align-items: center;
  background: #282a35;
  font-family: "Lato", sans-serif;
  font-size: 15.500px;
  font-weight: 700;
  letter-spacing: 0.6px;
  color: #ddd;
}

.topnav a {
  height: 100%;
  display: flex;
  align-items: center;
  padding: 0 15.700px;
  white-space: nowrap;
}

.topnav .nav-home {
  width: 52px;
  padding: 0 0 0 16px;
}

.topnav .nav-active {
  width: 82px;
  justify-content: center;
  padding: 0;
  background: #04aa6d;
  color: #fff;
}

.lang-widget {
  width: 98px;
  height: 27px;
  margin: auto 7px 8px auto;
  display: flex;
  align-items: center;
  padding-left: 4px;
  border: 1px solid #ccc;
  background: #fff;
  color: #222;
  font: 13px "Liberation Sans", sans-serif;
  letter-spacing: 0;
}

.lang-widget span {
  margin-left: 7px;
}

.lang-sep {
  width: 1px;
  height: 17px;
  margin-left: 6px;
  background: #ccc;
}

.lang-arrow {
  margin-left: 5px;
  border-left: 5px solid transparent;
  border-right: 5px solid transparent;
  border-top: 11px solid #c8c8c8;
}

.topnav .nav-ico {
  width: 52px;
  flex: none;
  justify-content: center;
  padding: 0;
}

.content {
  flex: 1;
  min-height: 0;
  display: flex;
  overflow: hidden;
  background: #f9f9f9;
}

.sidebar {
  width: 206px;
  flex: none;
  padding-left: 16px;
  background: #e7e9eb;
  font-size: 15px;
  color: #111;
}

.side-cut {
  width: 63px;
  height: 7px;
  margin: 0 0 3.500px 62px;
  display: flex;
  justify-content: center;
  background: #c8c8c8;
}

.side-cut i {
  width: 7px;
  height: 2px;
  border-radius: 0 0 3px 3px;
  background: #222;
}

.sidebar a {
  display: block;
  line-height: 25.500px;
  white-space: nowrap;
}

.main {
  width: 871px;
  flex: none;
  margin-left: 13px;
  padding: 310px 33px 0;
  background: #d9eee1;
  font-family: "DejaVu Sans", sans-serif;
  font-size: 15px;
  line-height: 22.500px;
  color: #000;
}

.intro p {
  margin-bottom: 15px;
  white-space: nowrap;
}

.start-btn {
  width: 337px;
  height: 40px;
  margin-top: 19px;
  border-radius: 5px;
  background: #04a06a;
}

.right-col {
  flex: 1;
  min-width: 0;
  padding: 17px 5px 0 9px;
  background: #fff;
}

.ad-label {
  height: 17px;
  padding-right: 40px;
  font-size: 12.500px;
  line-height: 16px;
  color: #000;
  white-space: nowrap;
  text-align: right;
}

.ad {
  position: relative;
  height: 500px;
  overflow: hidden;
  background: #f8f8fb;
}

.ad-head {
  padding: 61px 0 0 9px;
  font: 22.500px/29px "Inter", sans-serif;
  color: #1a73e8;
}

.ad-mark {
  position: absolute;
  top: 18px;
  left: 72px;
  writing-mode: vertical-rl;
  font: 81px/1 "Inter", sans-serif;
  color: transparent;
  -webkit-text-stroke: 1px #e4e4e8;
}

.ad-icons {
  position: absolute;
  top: 0;
  right: 0;
  display: flex;
  gap: 1px;
}

.ad-icons i {
  width: 15px;
  height: 15px;
  display: flex;
  align-items: center;
  justify-content: center;
  background: #ddd;
}

/* language dropdown */
.lang-menu {
  position: absolute;
  top: 265px;
  left: 189px;
  width: 965px;
  height: 262px;
  display: grid;
  grid-auto-flow: column;
  grid-template-rows: repeat(11, 23px);
  grid-template-columns: 73px 145px 85px 105px 90px 108px 108px 85px 82px 1fr;
  padding: 3px 0 0 7px;
  border: 1px solid #6b90da;
  background: #fff;
  box-shadow: 0 3px 8px rgba(0, 0, 0, 0.55);
  font-size: 13.250px;
  line-height: 23px;
  white-space: nowrap;
}

.lang-menu a {
  color: #00c;
}

.lang-current {
  color: #000;
}

.status-tip {
  position: absolute;
  left: 0;
  bottom: 0;
  width: 110px;
  height: 20px;
  padding-left: 5px;
  border-radius: 0 5px 0 0;
  background: #4a120c;
  color: #fff;
  font-size: 13.200px;
  line-height: 19px;
  white-space: nowrap;
}

/* dock */
.desktop {
  flex: 1;
  min-height: 0;
  padding: 3px 41px 0;
  background: linear-gradient(#1c1a30 3px, #3d5d8a 3px);
}

.dock {
  height: 63px;
  display: flex;
  align-items: flex-start;
  padding: 4px 0 0 3.700px;
  border-radius: 3px 3px 0 0;
  background: linear-gradient(#5f86b7, #6795cc);
}

.dock-app {
  position: relative;
  width: 50.750px;
  height: 50px;
  flex: none;
  display: flex;
  align-items: center;
  justify-content: center;
}

.dock-app.running::after {
  content: "";
  position: absolute;
  bottom: -7px;
  left: 23.500px;
  width: 4px;
  height: 4px;
  border-radius: 50%;
  background: #0d2a55;
}

.dock-sep {
  width: 1px;
  height: 46px;
  margin: 4px 9px 0 13px;
  background: #46658f;
}

.dock-cal-m {
  font: 7px "Liberation Sans", sans-serif;
  fill: #fff;
}

.dock-cal-d {
  font: 22px "Liberation Sans", sans-serif;
  fill: #222;
}

.dock-md {
  font: bold 17px "Liberation Sans", sans-serif;
  fill: #fff;
}

.dock-term {
  font: bold 10px "Liberation Mono", monospace;
  fill: #fff;
}
```
